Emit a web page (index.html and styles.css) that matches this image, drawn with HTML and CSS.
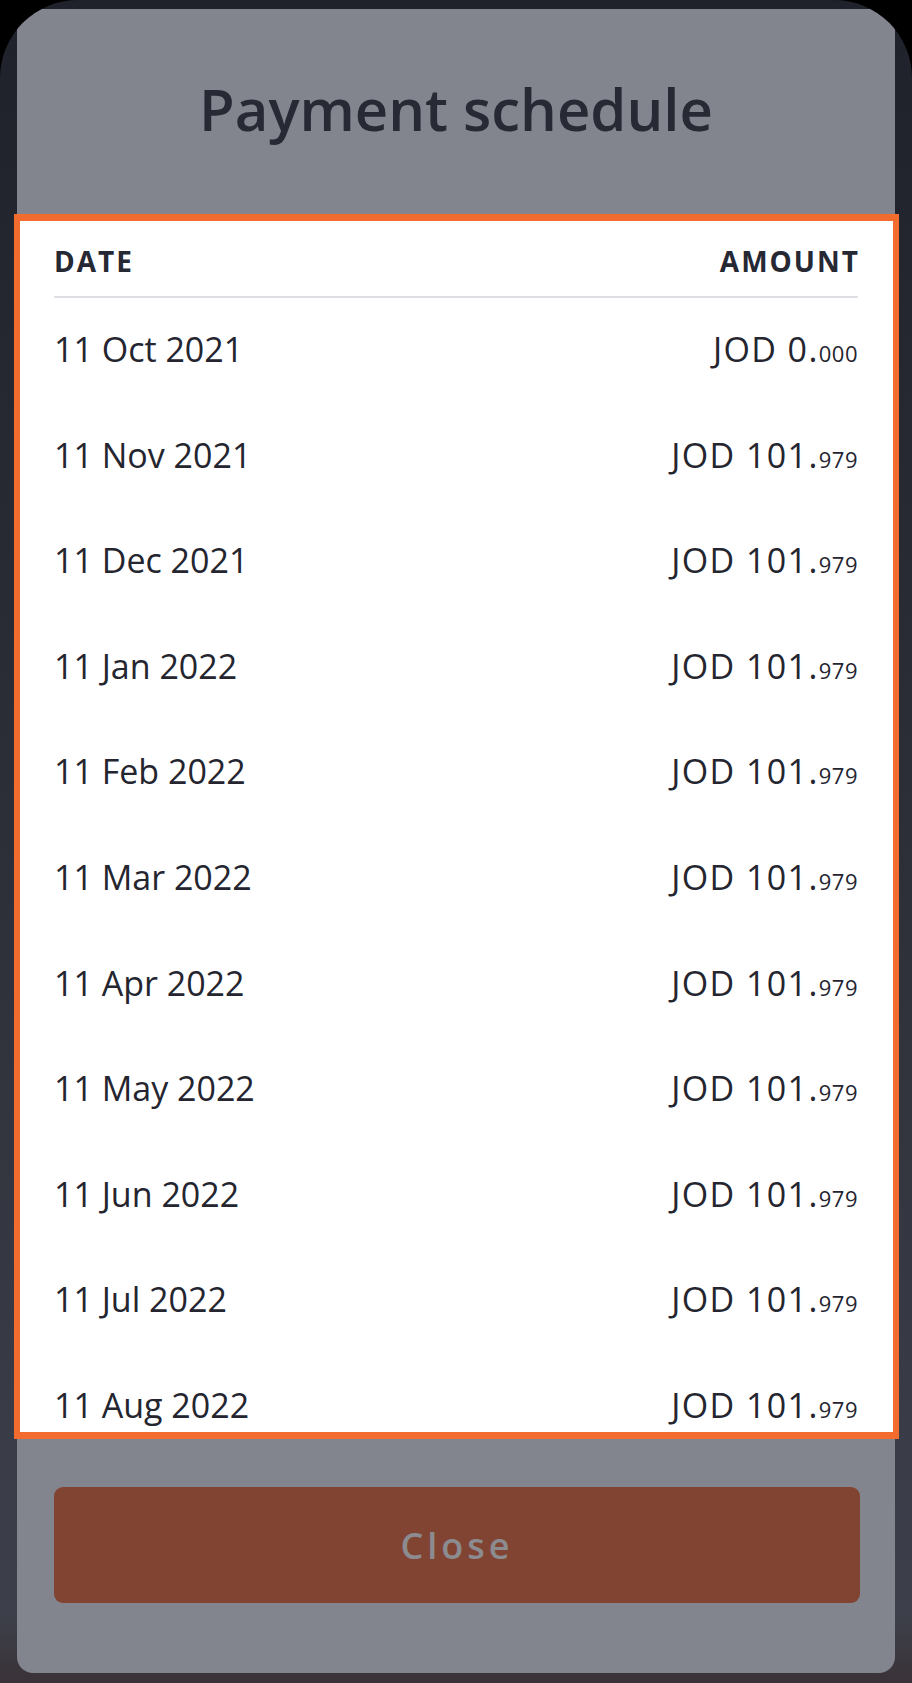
FILE: index.html
```html
<!DOCTYPE html>
<html lang="en">
<head>
  <meta charset="UTF-8" />
  <meta name="viewport" content="width=device-width, initial-scale=1.0"/>
  <title>Payment schedule</title>
  <link rel="stylesheet" href="styles.css">
</head>
<body>
  <div class="device">
    <div class="sheet">
      <h1 class="sheet-title">Payment schedule</h1>

      <!-- Таблица платежей -->
      <div class="schedule">
        <div class="schedule-head">
          <span>DATE</span>
          <span>AMOUNT</span>
        </div>
        <ul class="schedule-list">
          <li><span>11 Oct 2021</span><span class="amount">JOD 0.<small>000</small></span></li>
          <li><span>11 Nov 2021</span><span class="amount">JOD 101.<small>979</small></span></li>
          <li><span>11 Dec 2021</span><span class="amount">JOD 101.<small>979</small></span></li>
          <li><span>11 Jan 2022</span><span class="amount">JOD 101.<small>979</small></span></li>
          <li><span>11 Feb 2022</span><span class="amount">JOD 101.<small>979</small></span></li>
          <li><span>11 Mar 2022</span><span class="amount">JOD 101.<small>979</small></span></li>
          <li><span>11 Apr 2022</span><span class="amount">JOD 101.<small>979</small></span></li>
          <li><span>11 May 2022</span><span class="amount">JOD 101.<small>979</small></span></li>
          <li><span>11 Jun 2022</span><span class="amount">JOD 101.<small>979</small></span></li>
          <li><span>11 Jul 2022</span><span class="amount">JOD 101.<small>979</small></span></li>
          <li><span>11 Aug 2022</span><span class="amount">JOD 101.<small>979</small></span></li>
        </ul>
      </div>

      <button class="close-btn">Close</button>
    </div>
  </div>
</body>
</html>
```

FILE: styles.css
```css
* { box-sizing: border-box; }
body {
  margin: 0;
  background: #000;
  font-family: 'Open Sans', 'Liberation Sans', sans-serif;
}
.device {
  width: 912px;
  height: 1683px;
  padding: 9px 17px 0 17px;
  border-radius: 78px 78px 0 0;
  overflow: hidden;
  background: linear-gradient(to bottom, #20222b 0%, #2c2e38 50%, #3d404a 96%, #3a3238 100%);
}
.sheet {
  background: #83858e;
  border-radius: 0 0 16px 16px;
  padding: 65px 0 70px;
}
.sheet-title {
  margin: 0;
  text-align: center;
  font-size: 58px;
  line-height: 70px;
  font-weight: 600;
  color: #272935;
}
.schedule {
  margin: 70px -4px 0 -3px;
  height: 1225px;
  border: 6px solid #f26b2f;
  border-top-width: 7px;
  border-bottom-width: 7px;
  background: #fff;
  padding: 0 35px 0 34px;
  overflow: hidden;
}
.schedule-head {
  display: flex;
  justify-content: space-between;
  padding: 23px 0 18px;
  border-bottom: 2px solid #dedfe2;
  font-size: 28px;
  line-height: 34px;
  font-weight: 700;
  letter-spacing: 2px;
  color: #262833;
}
.schedule-head span:last-child {
  margin-right: -2px;
}
.schedule-list {
  list-style: none;
  margin: 0;
  padding: 0;
}
.schedule-list li {
  display: flex;
  justify-content: space-between;
  height: 105.6px;
  line-height: 102px;
  font-size: 34px;
  color: #24252f;
}
/* последняя строка обрезана рамкой */
.schedule-list li:last-child {
  height: 78px;
  line-height: 78px;
  padding-top: 12px;
}
.amount {
  letter-spacing: 1.4px;
}
.amount small {
  font-size: 22px;
  letter-spacing: 0.5px;
}
.close-btn {
  display: block;
  width: calc(100% - 72px);
  height: 116px;
  margin: 48px 35px 0 37px;
  border: none;
  border-radius: 9px;
  background: #814433;
  color: #8c8b90;
  font-family: inherit;
  font-size: 36px;
  font-weight: 600;
  letter-spacing: 4px;
}
```
